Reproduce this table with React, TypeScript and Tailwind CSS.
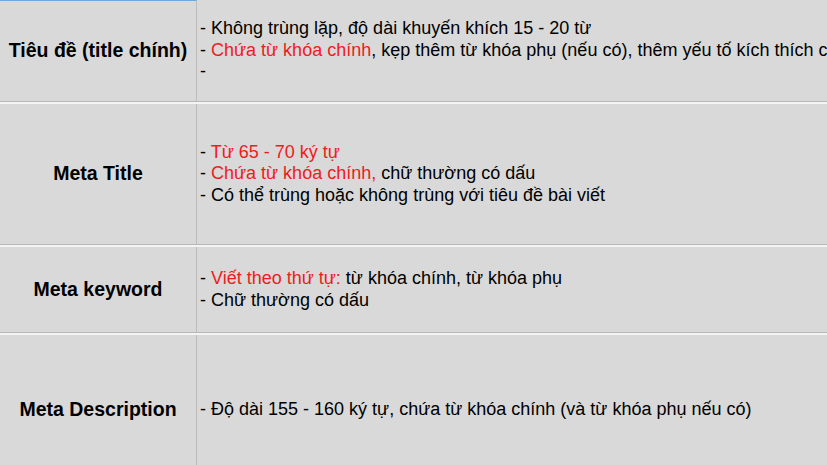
import React from "react";

const R = ({ children }: { children: React.ReactNode }) => (
  <span className="text-[#ee1c1c]">{children}</span>
);

type Row = { label: string; h: string; lines: React.ReactNode[]; top?: boolean };

const rows: Row[] = [
  {
    label: "Tiêu đề (title chính)",
    h: "h-[101px]",
    top: true,
    lines: [
      <>- Không trùng lặp, độ dài khuyến khích 15 - 20 từ</>,
      <>
        - <R>Chứa từ khóa chính</R>, kẹp thêm từ khóa phụ (nếu có), thêm yếu tố kích thích click
      </>,
      <>-</>,
    ],
  },
  {
    label: "Meta Title",
    h: "h-[140px]",
    lines: [
      <>
        - <R>Từ 65 - 70 ký tự</R>
      </>,
      <>
        - <R>Chứa từ khóa chính,</R> chữ thường có dấu
      </>,
      <>- Có thể trùng hoặc không trùng với tiêu đề bài viết</>,
    ],
  },
  {
    label: "Meta keyword",
    h: "h-[85px]",
    lines: [
      <>
        - <R>Viết theo thứ tự:</R> từ khóa chính, từ khóa phụ
      </>,
      <>- Chữ thường có dấu</>,
    ],
  },
  {
    label: "Meta Description",
    h: "h-[150px]",
    lines: [<>- Độ dài 155 - 160 ký tự, chứa từ khóa chính (và từ khóa phụ nếu có)</>],
  },
];

export default function App() {
  return (
    <div
      className="w-[827px] h-[465px] overflow-hidden bg-[#d9d9d9] text-black"
      style={{ fontFamily: '"Liberation Sans", Arial, sans-serif' }}
    >
      {rows.map((r, i) => (
        <div key={i}>
          {i > 0 && (
            <div className="flex flex-col">
              <div className="h-px bg-[#b8b8b8]" />
              <div className="h-[2px] bg-[#f4f4f4]" />
            </div>
          )}
          <div className={`flex ${r.h}`}>
            <div
              className={`w-[197px] shrink-0 flex items-center justify-center border-r border-r-[#bcbcbc] ${
                r.top ? "border-t border-t-[#6fa8dc]" : ""
              }`}
            >
              <span className="text-[19.5px] font-bold whitespace-nowrap">{r.label}</span>
            </div>
            <div className="flex-1 min-w-0 flex flex-col justify-center pl-[3px] overflow-hidden">
              {r.lines.map((l, j) => (
                <div key={j} className="text-[18px] leading-[21.5px] whitespace-nowrap">
                  {l}
                </div>
              ))}
            </div>
          </div>
        </div>
      ))}
    </div>
  );
}
